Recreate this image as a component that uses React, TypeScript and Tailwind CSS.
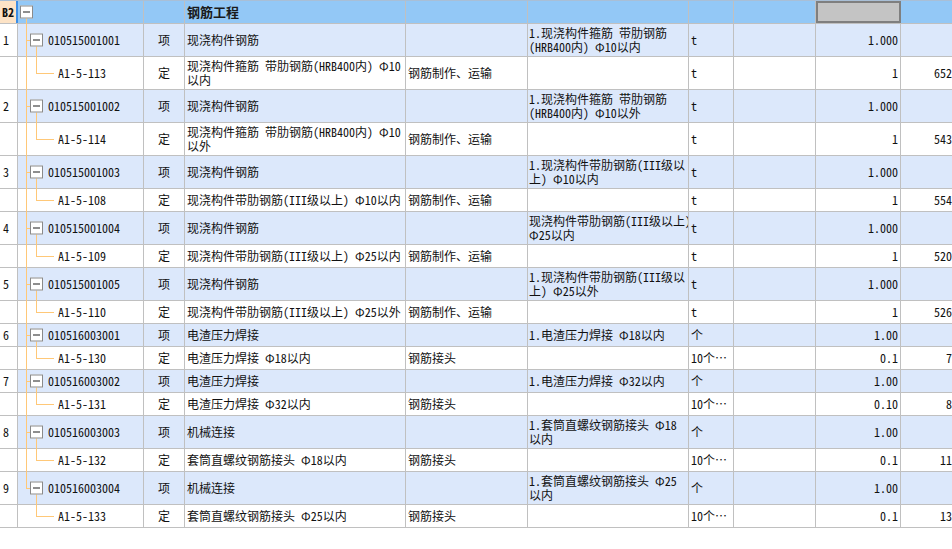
type Child = {
  code: string;
  name: string[];
  content: string;
  unit: string;
  qty: string;
  price: string;
  tall: boolean;
};

type Item = {
  no: number;
  code: string;
  name: string;
  feature: string[];
  unit: string;
  qty: string;
  tall: boolean;
  child: Child;
};

const items: Item[] = [
  {
    no: 1,
    code: '010515001001',
    name: '现浇构件钢筋',
    feature: ['1.现浇构件箍筋 带肋钢筋', '(HRB400内) Φ10以内'],
    unit: 't',
    qty: '1.000',
    tall: true,
    child: { code: 'A1-5-113', name: ['现浇构件箍筋 带肋钢筋(HRB400内) Φ10', '以内'], content: '钢筋制作、运输', unit: 't', qty: '1', price: '6521.38', tall: true },
  },
  {
    no: 2,
    code: '010515001002',
    name: '现浇构件钢筋',
    feature: ['1.现浇构件箍筋 带肋钢筋', '(HRB400内) Φ10以外'],
    unit: 't',
    qty: '1.000',
    tall: true,
    child: { code: 'A1-5-114', name: ['现浇构件箍筋 带肋钢筋(HRB400内) Φ10', '以外'], content: '钢筋制作、运输', unit: 't', qty: '1', price: '5436.12', tall: true },
  },
  {
    no: 3,
    code: '010515001003',
    name: '现浇构件钢筋',
    feature: ['1.现浇构件带肋钢筋(III级以', '上) Φ10以内'],
    unit: 't',
    qty: '1.000',
    tall: true,
    child: { code: 'A1-5-108', name: ['现浇构件带肋钢筋(III级以上) Φ10以内'], content: '钢筋制作、运输', unit: 't', qty: '1', price: '5543.27', tall: false },
  },
  {
    no: 4,
    code: '010515001004',
    name: '现浇构件钢筋',
    feature: ['现浇构件带肋钢筋(III级以上)', 'Φ25以内'],
    unit: 't',
    qty: '1.000',
    tall: true,
    child: { code: 'A1-5-109', name: ['现浇构件带肋钢筋(III级以上) Φ25以内'], content: '钢筋制作、运输', unit: 't', qty: '1', price: '5205.84', tall: false },
  },
  {
    no: 5,
    code: '010515001005',
    name: '现浇构件钢筋',
    feature: ['1.现浇构件带肋钢筋(III级以', '上) Φ25以外'],
    unit: 't',
    qty: '1.000',
    tall: true,
    child: { code: 'A1-5-110', name: ['现浇构件带肋钢筋(III级以上) Φ25以外'], content: '钢筋制作、运输', unit: 't', qty: '1', price: '5264.09', tall: false },
  },
  {
    no: 6,
    code: '010516003001',
    name: '电渣压力焊接',
    feature: ['1.电渣压力焊接 Φ18以内'],
    unit: '个',
    qty: '1.00',
    tall: false,
    child: { code: 'A1-5-130', name: ['电渣压力焊接 Φ18以内'], content: '钢筋接头', unit: '10个…', qty: '0.1', price: '72.56', tall: false },
  },
  {
    no: 7,
    code: '010516003002',
    name: '电渣压力焊接',
    feature: ['1.电渣压力焊接 Φ32以内'],
    unit: '个',
    qty: '1.00',
    tall: false,
    child: { code: 'A1-5-131', name: ['电渣压力焊接 Φ32以内'], content: '钢筋接头', unit: '10个…', qty: '0.10', price: '86.43', tall: false },
  },
  {
    no: 8,
    code: '010516003003',
    name: '机械连接',
    feature: ['1.套筒直螺纹钢筋接头 Φ18', '以内'],
    unit: '个',
    qty: '1.00',
    tall: true,
    child: { code: 'A1-5-132', name: ['套筒直螺纹钢筋接头 Φ18以内'], content: '钢筋接头', unit: '10个…', qty: '0.1', price: '115.27', tall: false },
  },
  {
    no: 9,
    code: '010516003004',
    name: '机械连接',
    feature: ['1.套筒直螺纹钢筋接头 Φ25', '以内'],
    unit: '个',
    qty: '1.00',
    tall: true,
    child: { code: 'A1-5-133', name: ['套筒直螺纹钢筋接头 Φ25以内'], content: '钢筋接头', unit: '10个…', qty: '0.1', price: '132.90', tall: false },
  },
];

const MinusBox = ({ className }: { className: string }) => (
  <span className={`absolute w-[13px] h-[13px] border border-[#8a8a8a] bg-white flex items-center justify-center ${className}`}>
    <span className="w-[7px] h-px bg-[#1f1f1f]" />
  </span>
);

const Lines = ({ lines }: { lines: string[] }) => (
  <div className="leading-[14px] whitespace-pre">
    {lines.map((l, i) => (
      <div key={i}>{l}</div>
    ))}
  </div>
);

const ItemRow = ({ item, last }: { item: Item; last: boolean }) => {
  const cell = 'border-r border-[#c0c0c0] flex items-center overflow-hidden bg-[#dce8fb]';
  return (
    <div
      className={`grid grid-cols-[18px_126px_41px_221px_122px_161px_45px_82px_85px_78px] border-b border-[#c0c0c0] ${
        item.tall ? 'h-[33px]' : 'h-[23px]'
      }`}
    >
      <div className="border-r border-[#c0c0c0] flex items-center pl-[3px] bg-white">{item.no}</div>
      <div className="relative border-r border-[#c0c0c0] flex items-center pl-[30px] bg-[#dce8fb]">
        <span className={`absolute left-[8px] top-0 w-px bg-[#ffc878] ${last ? 'h-1/2' : '-bottom-px'}`} />
        <span className="absolute left-[8px] top-1/2 w-[5px] h-px bg-[#ffc878]" />
        <span className="absolute left-[18px] top-1/2 -bottom-px w-px bg-[#ffc878]" />
        <MinusBox className="left-[12px] top-1/2 -translate-y-1/2" />
        {item.code}
      </div>
      <div className={`${cell} justify-center`}>项</div>
      <div className={`${cell} pl-[2px]`}>{item.name}</div>
      <div className={cell} />
      <div className={`${cell} pl-[1px]`}>
        <Lines lines={item.feature} />
      </div>
      <div className={`${cell} pl-[2px]`}>{item.unit}</div>
      <div className={cell} />
      <div className={`${cell} justify-end pr-[2px]`}>{item.qty}</div>
      <div className={cell} />
    </div>
  );
};

const ChildRow = ({ child, last }: { child: Child; last: boolean }) => {
  const cell = 'border-r border-[#c0c0c0] flex items-center overflow-hidden bg-white';
  return (
    <div
      className={`grid grid-cols-[18px_126px_41px_221px_122px_161px_45px_82px_85px_78px] border-b border-[#c0c0c0] ${
        child.tall ? 'h-[33px]' : 'h-[23px]'
      }`}
    >
      <div className="border-r border-[#c0c0c0] bg-white" />
      <div className="relative border-r border-[#c0c0c0] flex items-center pl-[40px] bg-white">
        {!last && <span className="absolute left-[8px] top-0 -bottom-px w-px bg-[#ffc878]" />}
        <span className="absolute left-[18px] top-0 h-1/2 w-px bg-[#ffc878]" />
        <span className="absolute left-[18px] top-1/2 w-[18px] h-px bg-[#ffc878]" />
        {child.code}
      </div>
      <div className={`${cell} justify-center`}>定</div>
      <div className={`${cell} pl-[2px]`}>
        <Lines lines={child.name} />
      </div>
      <div className={`${cell} pl-[2px]`}>{child.content}</div>
      <div className={cell} />
      <div className={`${cell} pl-[2px]`}>{child.unit}</div>
      <div className={cell} />
      <div className={`${cell} justify-end pr-[2px]`}>{child.qty}</div>
      <div className={`${cell} justify-end pr-[2px]`}>{child.price}</div>
    </div>
  );
};

export default function App() {
  return (
    <div className="w-[952px] h-[549px] overflow-hidden bg-white text-[12px] text-[#111] font-['Noto_Sans_CJK_SC','Noto_Sans_CJK_JP',sans-serif] [font-feature-settings:'hwid']">
      <div className="w-[979px]">
        {/* header row */}
        <div className="grid grid-cols-[18px_126px_41px_221px_122px_161px_45px_82px_85px_78px] h-[24px] border-t border-[#a9bfd6] border-b border-b-[#c0c0c0] bg-[#93c8f6]">
          <div className="flex items-center justify-end overflow-hidden pr-[2px] bg-[#fde3c6] border-r-2 border-[#3d8ee6] font-bold">
            B2
          </div>
          <div className="relative border-r border-[#c0c0c0]">
            <span className="absolute left-[8px] top-1/2 -bottom-px w-px bg-[#ffc878]" />
            <MinusBox className="left-[2px] top-1/2 -translate-y-1/2" />
          </div>
          <div className="border-r border-[#c0c0c0]" />
          <div className="border-r border-[#c0c0c0] flex items-center pl-[2px] font-bold text-[13px] text-[#1a1a1a]">
            钢筋工程
          </div>
          <div className="border-r border-[#c0c0c0]" />
          <div className="border-r border-[#c0c0c0]" />
          <div className="border-r border-[#c0c0c0]" />
          <div className="border-r border-[#c0c0c0]" />
          <div className="border-2 border-[#7f7f7f] bg-[#c4c4c4]" />
          <div className="border-r border-[#c0c0c0]" />
        </div>
        {items.map((item, i) => (
          <div key={item.code}>
            <ItemRow item={item} last={i === items.length - 1} />
            <ChildRow child={item.child} last={i === items.length - 1} />
          </div>
        ))}
      </div>
    </div>
  );
}
